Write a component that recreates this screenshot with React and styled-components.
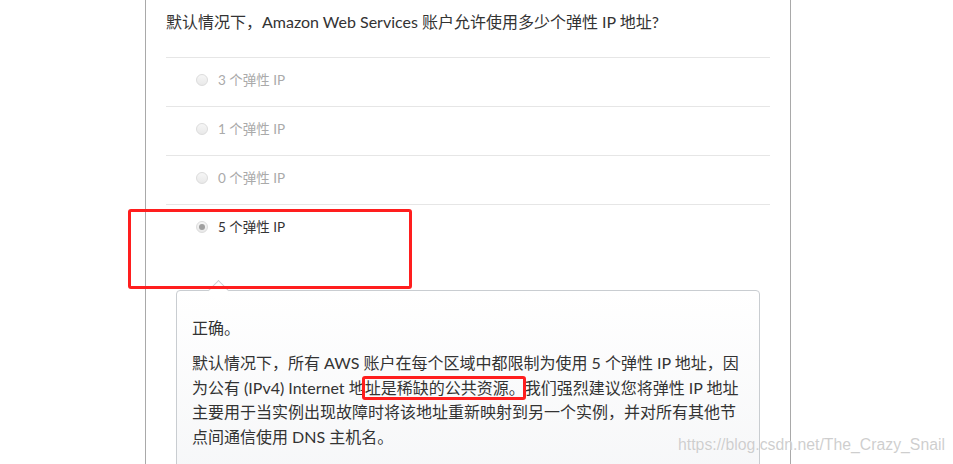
import React from 'react';
import styled, { createGlobalStyle } from 'styled-components';

const GlobalStyle = createGlobalStyle`
    html, body {
        margin: 0;
        padding: 0;
        background: #fff;
        overflow: hidden;
    }
    body {
        font-family: 'Lato', 'Noto Sans CJK SC', sans-serif;
        color: #333;
    }
`;

const options = [
    { label: '3 个弹性 IP' },
    { label: '1 个弹性 IP' },
    { label: '0 个弹性 IP' },
    { label: '5 个弹性 IP', checked: true },
];

const App = () => {
    return (
        <Page>
            <GlobalStyle />
            <Panel>
                <Question>默认情况下，Amazon Web Services 账户允许使用多少个弹性 IP 地址?</Question>

                {/* answer list */}
                <OptionList>
                    {options.map((opt) => (
                        <OptionRow key={opt.label}>
                            <Radio $checked={opt.checked} />
                            <OptionLabel $checked={opt.checked}>{opt.label}</OptionLabel>
                        </OptionRow>
                    ))}
                </OptionList>

                {/* feedback */}
                <Feedback>
                    <FeedbackTitle>正确。</FeedbackTitle>
                    <FeedbackText>
                        默认情况下，所有 AWS 账户在每个区域中都限制为使用 5 个弹性 IP 地址，因<br />
                        为公有 (IPv4) Internet 地<Highlight>址是稀缺的公共资源。</Highlight>我们强烈建议您将弹性 IP 地址<br />
                        主要用于当实例出现故障时将该地址重新映射到另一个实例，并对所有其他节<br />
                        点间通信使用 DNS 主机名。
                    </FeedbackText>
                </Feedback>
            </Panel>

            <RowMarker />
            <Watermark>https://blog.csdn.net/The_Crazy_Snail</Watermark>
        </Page>
    );
};

const Page = styled.div`
    position: relative;
    width: 953px;
    height: 464px;
    padding-left: 145px;
    box-sizing: border-box;
    overflow: hidden;
`;

const Panel = styled.div`
    width: 646px;
    height: 100%;
    box-sizing: border-box;
    border-left: 1px solid #a9a9a9;
    border-right: 1px solid #a9a9a9;
    padding: 10px 20px 0 20px;
`;

const Question = styled.div`
    font-size: 16px;
    line-height: 24px;
    color: #333;
    margin-bottom: 23px;
    white-space: nowrap;
`;

const OptionList = styled.div`
    display: flex;
    flex-direction: column;
`;

const OptionRow = styled.div`
    display: flex;
    align-items: center;
    height: 14px;
    padding: 15px 0 19px 30px;
    border-top: 1px solid #e6e6e6;
`;

const Radio = styled.span`
    position: relative;
    width: 12px;
    height: 12px;
    margin-right: 10px;
    border-radius: 50%;
    box-sizing: border-box;
    border: 1px solid #dcdcdc;
    background: linear-gradient(#f6f6f6, #e9e9e9);

    &::after {
        content: '';
        display: ${({ $checked }) => ($checked ? 'block' : 'none')};
        position: absolute;
        top: 2px;
        left: 2px;
        width: 6px;
        height: 6px;
        border-radius: 50%;
        background: #a0a0a0;
    }
`;

const OptionLabel = styled.span`
    font-size: 13.5px;
    line-height: 14px;
    color: ${({ $checked }) => ($checked ? '#333' : '#aaa')};
    white-space: nowrap;
`;

const Feedback = styled.div`
    position: relative;
    margin: 37px 10px 0 10px;
    height: 220px;
    padding: 24px 15px 0 15px;
    border: 1px solid #c9cdd1;
    border-radius: 4px;
    background: linear-gradient(#ffffff, #f3f4f6);

    &::before {
        content: '';
        position: absolute;
        top: -8px;
        left: 34px;
        width: 14px;
        height: 14px;
        background: #fff;
        border-top: 1px solid #c9cdd1;
        border-left: 1px solid #c9cdd1;
        transform: rotate(45deg);
    }
`;

const FeedbackTitle = styled.div`
    font-size: 16px;
    line-height: 25px;
    color: #333;
    margin-bottom: 11px;
`;

const FeedbackText = styled.p`
    margin: 0;
    font-size: 16px;
    line-height: 24.5px;
    color: #333;
    white-space: nowrap;
`;

const Highlight = styled.span`
    position: relative;

    &::after {
        content: '';
        position: absolute;
        top: -2px;
        bottom: -3px;
        left: -3px;
        right: -1px;
        border: 3px solid #ff1e1e;
        border-radius: 3px;
    }
`;

const RowMarker = styled.div`
    position: absolute;
    left: 128px;
    top: 209px;
    width: 284px;
    height: 80px;
    box-sizing: border-box;
    border: 3px solid #ff1e1e;
    border-radius: 3px;
`;

const Watermark = styled.div`
    position: absolute;
    right: 8px;
    bottom: 10px;
    font-family: 'Liberation Sans', Arial, sans-serif;
    font-size: 15.8px;
    color: rgba(190, 190, 190, 0.75);
    text-shadow: 0 0 1px #fff;
    white-space: nowrap;
`;

export default App;
